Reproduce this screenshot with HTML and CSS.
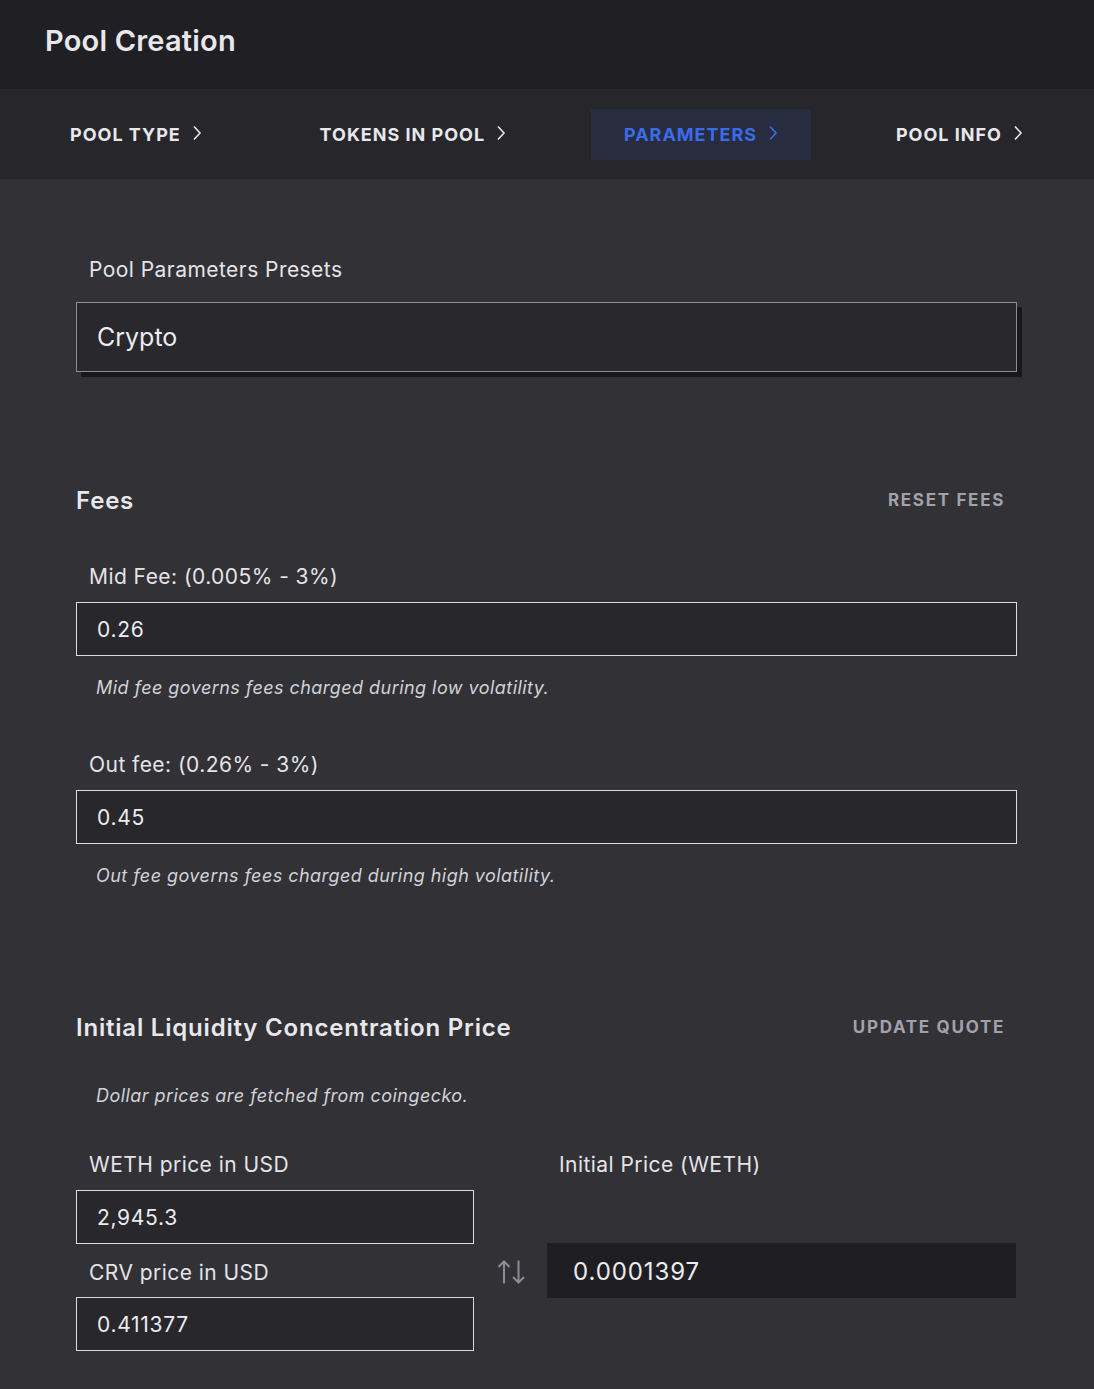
FILE: index.html
```html
<!DOCTYPE html>
<html lang="en">
<head>
<meta charset="utf-8">
<title>Pool Creation</title>
<link rel="stylesheet" href="styles.css">
</head>
<body>
<header class="topbar">
  <h1 class="title">Pool Creation</h1>
</header>
<nav class="steps">
  <div class="step">POOL TYPE <svg class="chev" viewBox="0 0 10 16"><path d="M2 1.5 L8 8 L2 14.5"/></svg></div>
  <div class="step">TOKENS IN POOL <svg class="chev" viewBox="0 0 10 16"><path d="M2 1.5 L8 8 L2 14.5"/></svg></div>
  <div class="step active">PARAMETERS <svg class="chev" viewBox="0 0 10 16"><path d="M2 1.5 L8 8 L2 14.5"/></svg></div>
  <div class="step">POOL INFO <svg class="chev" viewBox="0 0 10 16"><path d="M2 1.5 L8 8 L2 14.5"/></svg></div>
</nav>
<main class="content">
  <section class="presets">
    <div class="field-label preset-label">Pool Parameters Presets</div>
    <div class="select">Crypto</div>
  </section>

  <section class="fees">
    <div class="section-head">
      <h2 class="section-title">Fees</h2>
      <span class="action">RESET FEES</span>
    </div>
    <div class="field first">
      <div class="field-label">Mid Fee: (0.005% - 3%)</div>
      <div class="input">0.26</div>
      <p class="hint">Mid fee governs fees charged during low volatility.</p>
    </div>
    <div class="field second">
      <div class="field-label">Out fee: (0.26% - 3%)</div>
      <div class="input">0.45</div>
      <p class="hint">Out fee governs fees charged during high volatility.</p>
    </div>
  </section>

  <section class="liquidity">
    <div class="section-head">
      <h2 class="section-title">Initial Liquidity Concentration Price</h2>
      <span class="action">UPDATE QUOTE</span>
    </div>
    <p class="hint dollar">Dollar prices are fetched from coingecko.</p>
    <div class="price-grid">
      <div class="price-left">
        <div class="field-label">WETH price in USD</div>
        <div class="input">2,945.3</div>
        <div class="field-label crv">CRV price in USD</div>
        <div class="input">0.411377</div>
      </div>
      <div class="price-right">
        <div class="field-label right-label">Initial Price (WETH)</div>
        <div class="swap">
          <svg class="swap-icon" viewBox="0 0 28 26"><path d="M7 2.5 V24.5 M1.5 8 L7 2.5 L12.5 8"/><path d="M21.5 1.5 V23.5 M16 18 L21.5 23.5 L27 18"/></svg>
        </div>
        <div class="result">0.0001397</div>
      </div>
    </div>
  </section>
</main>
</body>
</html>
```

FILE: styles.css
```css
* { box-sizing: border-box; }
html, body {
  margin: 0;
  padding: 0;
  background: #313136;
}
body {
  font-family: Inter, "Noto Sans", "Liberation Sans", sans-serif;
  color: #e6e6ea;
  min-height: 1389px;
}

.topbar {
  height: 89px;
  background: #1f1f24;
  display: flex;
  align-items: center;
  padding-left: 45px;
}
.title {
  margin: 0;
  font-size: 29px;
  font-weight: 600;
  color: #e8e8ec;
  letter-spacing: 0.2px;
  position: relative;
  top: -4px;
}

.steps {
  height: 90px;
  background: #26262b;
  display: flex;
  justify-content: space-between;
  align-items: center;
  padding: 0 38px 0 37px;
}
.step {
  height: 51px;
  padding: 0 33px;
  display: flex;
  align-items: center;
  gap: 11px;
  font-size: 18px;
  font-weight: 700;
  letter-spacing: 1px;
  color: #e8e8ec;
}
.step .chev {
  width: 10px;
  height: 16px;
  fill: none;
  stroke: currentColor;
  stroke-width: 1.6;
  margin-top: -3px;
}
.step.active {
  background: #272c3f;
  color: #3b6ce8;
}

.content {
  width: 941px;
  margin-left: 76px;
  padding-bottom: 40px;
}

.field-label {
  font-size: 21px;
  line-height: 24px;
  padding-left: 13px;
  padding-top: 1px;
  height: 24px;
  letter-spacing: 0.45px;
  color: #e4e4e8;
  margin-bottom: 14px;
}
.presets {
  padding-top: 78px;
}
.preset-label {
  margin-bottom: 21px;
}
.select {
  height: 70px;
  border: 1px solid #8a8d99;
  background: #28282d;
  box-shadow: 5px 5px 0 0 #18181b;
  display: flex;
  align-items: center;
  padding-left: 20px;
  font-size: 25px;
  color: #ececf0;
}

.section-head {
  display: flex;
  justify-content: space-between;
  align-items: center;
  height: 30px;
}
.section-title {
  margin: 0;
  font-size: 24px;
  font-weight: 600;
  line-height: 30px;
  letter-spacing: 0.8px;
  color: #e8e8ec;
  padding-top: 1px;
}
.action {
  font-size: 17px;
  font-weight: 700;
  letter-spacing: 1.7px;
  color: #a2a2aa;
  margin-right: 12px;
  margin-top: -1px;
}

.fees {
  margin-top: 113px;
}
.field.first { margin-top: 49px; }
.field.second { margin-top: 54px; }

.input {
  height: 54px;
  border: 1px solid #dcdce0;
  background: #27272c;
  display: flex;
  align-items: center;
  padding-left: 20px;
  font-size: 21px;
  letter-spacing: 0.7px;
  color: #ececf0;
}
.hint {
  margin: 20px 0 0;
  padding-left: 20px;
  padding-top: 1px;
  font-size: 18px;
  line-height: 22px;
  height: 22px;
  font-style: italic;
  letter-spacing: 0.45px;
  color: #d2d2d8;
}

.liquidity {
  margin-top: 126px;
}
.hint.dollar {
  margin-top: 42px;
}

.price-grid {
  margin-top: 46px;
  display: grid;
  grid-template-columns: 398px 1fr;
}
.price-left .crv {
  margin-top: 16px;
  margin-bottom: 13px;
}
.price-right {
  display: grid;
  grid-template-columns: 73px 1fr;
  grid-template-rows: 24px 55px;
  row-gap: 67px;
  margin-right: 1px;
}
.right-label {
  grid-column: 2;
  grid-row: 1;
  padding-left: 12px;
  margin-bottom: 0;
}
.swap {
  grid-column: 1;
  grid-row: 2;
  display: flex;
  align-items: center;
  justify-content: center;
}
.swap-icon {
  width: 28px;
  height: 26px;
  fill: none;
  stroke: #8c8c92;
  stroke-width: 2;
  margin-top: 2px;
}
.result {
  grid-column: 2;
  grid-row: 2;
  background: #1f1f23;
  display: flex;
  align-items: center;
  padding-left: 26px;
  padding-top: 2px;
  font-size: 24px;
  letter-spacing: 0.9px;
  color: #ececf0;
}
```
